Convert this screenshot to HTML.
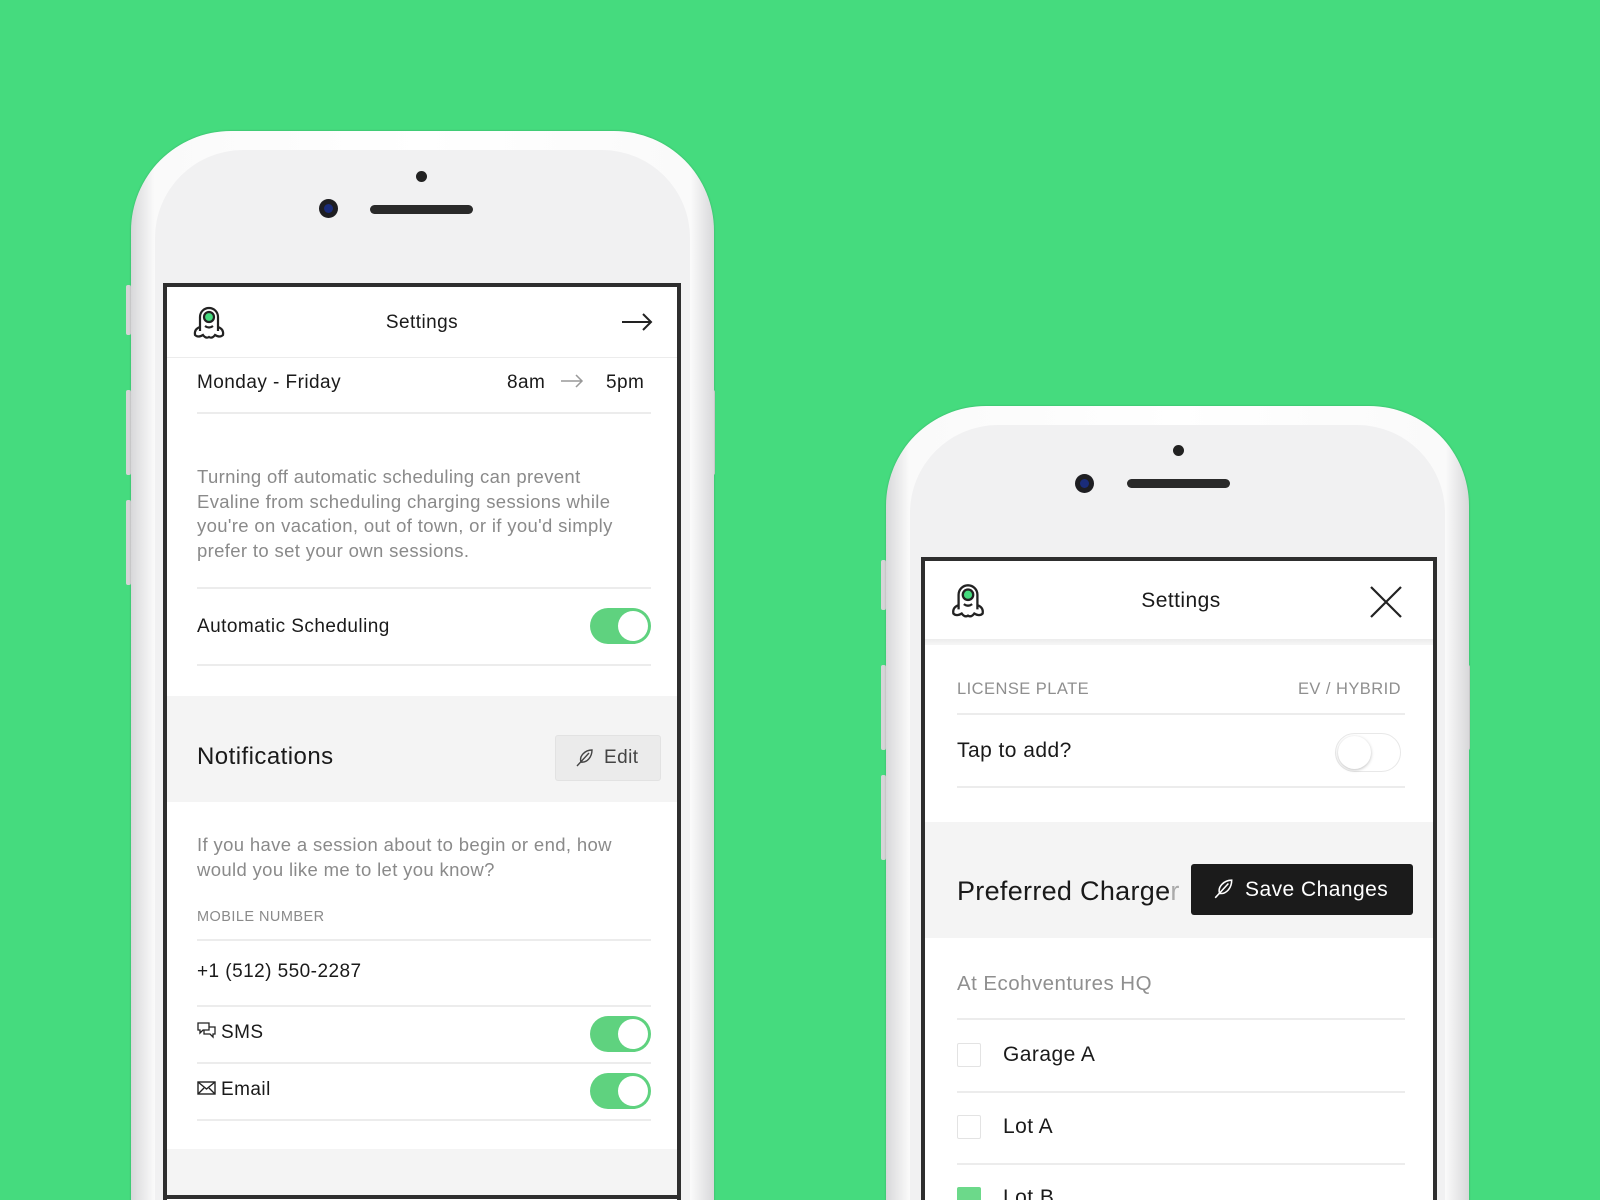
<!DOCTYPE html>
<html style="width:1600px;height:1200px;overflow:hidden"><head><meta charset="utf-8"><style>
*{margin:0;padding:0;box-sizing:border-box}
html,body{width:1600px;height:1200px;overflow:hidden}
body{background:#45db7e;position:relative;font-family:"Liberation Sans",sans-serif;color:#1a1a1a}
.abs{position:absolute}
.phone{position:absolute;border-radius:100px 100px 0 0;background:linear-gradient(90deg,#d8d8da,#fafafa 4%,#fff 50%,#fafafa 96%,#d8d8da);box-shadow:0 0 2px rgba(0,0,0,.2)}
.face{position:absolute;border-radius:88px 88px 0 0;background:#f1f1f2}
.screen{position:absolute;background:#fff;border:4px solid #2e2e2e;border-bottom:none;overflow:hidden}
.line{position:absolute;height:2px;background:#ececec}
.t{position:absolute;white-space:nowrap;line-height:1;letter-spacing:.45px}
.tog{position:absolute;width:61px;height:36px;border-radius:18px;background:#5fd27f}
.tog::after{content:"";position:absolute;right:3px;top:3px;width:30px;height:30px;border-radius:50%;background:#fff}
.gray{position:absolute;background:#f4f4f4}
.side{position:absolute;width:5px;background:#d5d5d7;border-radius:2px}
.p{position:absolute;white-space:nowrap;font-size:18.5px;line-height:24.5px;color:#8a8a8a;letter-spacing:.35px}
</style></head><body>

<!-- LEFT PHONE -->
<div class="side" style="left:126px;top:285px;height:50px"></div>
<div class="side" style="left:126px;top:390px;height:85px"></div>
<div class="side" style="left:126px;top:500px;height:85px"></div>
<div class="side" style="left:710px;top:390px;height:85px"></div>
<div class="phone" style="left:131px;top:131px;width:583px;height:1100px"></div>
<div class="face" style="left:155px;top:150px;width:535px;height:1100px"></div>
<div class="abs" style="left:416px;top:171px;width:11px;height:11px;border-radius:50%;background:#222"></div>
<div class="abs" style="left:319px;top:199px;width:19px;height:19px;border-radius:50%;background:#1e1e22"><div class="abs" style="left:5px;top:5px;width:9px;height:9px;border-radius:50%;background:#1a2c7a"></div></div>
<div class="abs" style="left:370px;top:205px;width:103px;height:9px;border-radius:5px;background:#2a2a2a"></div>

<div class="screen" style="left:163px;top:283px;width:518px;height:917px">
  <div class="line" style="left:0;top:70px;width:518px;height:1px"></div>
  <div class="abs" style="left:20px;top:14px"><svg width="44" height="44" viewBox="0 0 44 44" fill="none" stroke="#222" stroke-width="2.2"><path d="M13 30 V16 a9 9 0 0 1 18 0 V30"/><circle cx="22" cy="16" r="5" fill="#45db7e"/><path d="M18 25 q4 3 8 0"/><path d="M13 26 q-6 2 -5 8 q3 3 8 0 q3 4 6 2 q3 2 6 -2 q5 3 8 0 q1 -6 -5 -8"/></svg></div>
  <div class="t" style="left:0;width:510px;text-align:center;top:26px;font-size:19px">Settings</div>
  <div class="abs" style="left:454px;top:26px"><svg width="32" height="18" viewBox="0 0 32 18" fill="none" stroke="#222" stroke-width="2"><path d="M1 9 H30 M22 1 L30 9 L22 17"/></svg></div>
  <div class="t" style="left:30px;top:86px;font-size:19px">Monday - Friday</div>
  <div class="t" style="left:340px;top:86px;font-size:19px">8am</div>
  <div class="abs" style="left:393px;top:87px"><svg width="24" height="14" viewBox="0 0 24 14" fill="none" stroke="#999" stroke-width="1.5"><path d="M1 7 H22 M16 1 L22 7 L16 13"/></svg></div>
  <div class="t" style="left:439px;top:86px;font-size:19px">5pm</div>
  <div class="line" style="left:30px;top:125px;width:454px"></div>
  <div class="p" style="left:30px;top:178px">Turning off automatic scheduling can prevent<br>Evaline from scheduling charging sessions while<br>you're on vacation, out of town, or if you'd simply<br>prefer to set your own sessions.</div>
  <div class="line" style="left:30px;top:300px;width:454px"></div>
  <div class="t" style="left:30px;top:330px;font-size:19px">Automatic Scheduling</div>
  <div class="tog" style="left:423px;top:321px"></div>
  <div class="line" style="left:30px;top:377px;width:454px"></div>
  <div class="gray" style="left:0;top:409px;width:518px;height:106px"></div>
  <div class="t" style="left:30px;top:458px;font-size:24px">Notifications</div>
  <div class="abs" style="left:388px;top:448px;width:106px;height:46px;background:#ebebeb;border:1px solid #e2e2e2;border-radius:3px"></div>
  <div class="abs" style="left:408px;top:461px"><svg width="20" height="20" viewBox="0 0 20 20" fill="none" stroke="#444" stroke-width="1.4"><path d="M2 18 L14 5 M6 14 C4 8 10 2 17 2 C17 9 12 15 6 14 Z"/></svg></div>
  <div class="t" style="left:437px;top:461px;font-size:19px;color:#444">Edit</div>
  <div class="p" style="left:30px;top:546px">If you have a session about to begin or end, how<br>would you like me to let you know?</div>
  <div class="t" style="left:30px;top:623px;font-size:14.5px;color:#8a8a8a">MOBILE NUMBER</div>
  <div class="line" style="left:30px;top:652px;width:454px"></div>
  <div class="t" style="left:30px;top:675px;font-size:19px">+1 (512) 550-2287</div>
  <div class="line" style="left:30px;top:718px;width:454px"></div>
  <div class="abs" style="left:30px;top:734px"><svg width="20" height="18" viewBox="0 0 20 18" fill="none" stroke="#222" stroke-width="1.3"><path d="M1 2 h11 v7 h-6 l-3 3 v-3 h-2 z M12 6 h6 v7 h-2 v3 l-3 -3 h-6 v-4"/></svg></div>
  <div class="t" style="left:54px;top:736px;font-size:19px">SMS</div>
  <div class="tog" style="left:423px;top:729px"></div>
  <div class="line" style="left:30px;top:775px;width:454px"></div>
  <div class="abs" style="left:30px;top:794px"><svg width="19" height="14" viewBox="0 0 19 14" fill="none" stroke="#222" stroke-width="1.4"><rect x="1" y="1" width="17" height="12"/><path d="M1 1 L9.5 8 L18 1 M1 13 L7 7 M18 13 L12 7"/></svg></div>
  <div class="t" style="left:54px;top:793px;font-size:19px">Email</div>
  <div class="tog" style="left:423px;top:786px"></div>
  <div class="line" style="left:30px;top:832px;width:454px"></div>
  <div class="gray" style="left:0;top:862px;width:518px;height:50px"></div>
  <div class="abs" style="left:0;top:908px;width:518px;height:4px;background:#2e2e2e"></div>
</div>

<!-- RIGHT PHONE -->
<div class="side" style="left:881px;top:560px;height:50px"></div>
<div class="side" style="left:881px;top:665px;height:85px"></div>
<div class="side" style="left:881px;top:775px;height:85px"></div>
<div class="side" style="left:1465px;top:665px;height:85px"></div>
<div class="phone" style="left:886px;top:406px;width:583px;height:800px"></div>
<div class="face" style="left:910px;top:425px;width:535px;height:780px"></div>
<div class="abs" style="left:1173px;top:445px;width:11px;height:11px;border-radius:50%;background:#222"></div>
<div class="abs" style="left:1075px;top:474px;width:19px;height:19px;border-radius:50%;background:#1e1e22"><div class="abs" style="left:5px;top:5px;width:9px;height:9px;border-radius:50%;background:#1a2c7a"></div></div>
<div class="abs" style="left:1127px;top:479px;width:103px;height:9px;border-radius:5px;background:#2a2a2a"></div>

<div class="screen" style="left:921px;top:557px;width:516px;height:643px">
  <div class="abs" style="left:0;top:78px;width:516px;height:6px;background:linear-gradient(#ececec,#f6f6f6)"></div>
  <div class="abs" style="left:20px;top:17px"><svg width="46" height="46" viewBox="0 0 44 44" fill="none" stroke="#222" stroke-width="2.2"><path d="M13 30 V16 a9 9 0 0 1 18 0 V30"/><circle cx="22" cy="16" r="5" fill="#45db7e"/><path d="M18 25 q4 3 8 0"/><path d="M13 26 q-6 2 -5 8 q3 3 8 0 q3 4 6 2 q3 2 6 -2 q5 3 8 0 q1 -6 -5 -8"/></svg></div>
  <div class="t" style="left:0;width:512px;text-align:center;top:29px;font-size:21px">Settings</div>
  <div class="abs" style="left:445px;top:25px"><svg width="32" height="32" viewBox="0 0 32 32" stroke="#222" stroke-width="2.2"><path d="M1 1 L31 31 M31 1 L1 31"/></svg></div>
  <div class="t" style="left:32px;top:120px;font-size:16.5px;color:#8f8f8f">LICENSE PLATE</div>
  <div class="t" style="right:32px;top:120px;font-size:16.5px;color:#8f8f8f">EV / HYBRID</div>
  <div class="line" style="left:32px;top:152px;width:448px"></div>
  <div class="t" style="left:32px;top:179px;font-size:21px">Tap to add?</div>
  <div class="abs" style="left:410px;top:172px;width:66px;height:39px;border-radius:20px;background:#fff;border:1px solid #e8e8e8"><div class="abs" style="left:2px;top:2px;width:33px;height:33px;border-radius:50%;background:#fff;box-shadow:0 1px 3px rgba(0,0,0,.25)"></div></div>
  <div class="line" style="left:32px;top:225px;width:448px"></div>
  <div class="gray" style="left:0;top:261px;width:516px;height:116px"></div>
  <div class="t" style="left:32px;top:317px;font-size:27px;letter-spacing:.3px">Preferred Charge<span style="color:#aaa">r</span></div>
  <div class="abs" style="left:266px;top:303px;width:222px;height:51px;background:#1b1b1b;border-radius:3px"></div>
  <div class="abs" style="left:288px;top:317px"><svg width="22" height="22" viewBox="0 0 20 20" fill="none" stroke="#fff" stroke-width="1.4"><path d="M2 18 L14 5 M6 14 C4 8 10 2 17 2 C17 9 12 15 6 14 Z"/></svg></div>
  <div class="t" style="left:320px;top:318px;font-size:21px;color:#fff">Save Changes</div>
  <div class="t" style="left:32px;top:413px;font-size:20.5px;color:#8f8f8f">At Ecohventures HQ</div>
  <div class="line" style="left:32px;top:457px;width:448px"></div>
  <div class="abs" style="left:32px;top:482px;width:24px;height:24px;border:1px solid #e3e3e3;border-radius:2px"></div>
  <div class="t" style="left:78px;top:483px;font-size:21px">Garage A</div>
  <div class="line" style="left:32px;top:530px;width:448px"></div>
  <div class="abs" style="left:32px;top:554px;width:24px;height:24px;border:1px solid #e3e3e3;border-radius:2px"></div>
  <div class="t" style="left:78px;top:555px;font-size:21px">Lot A</div>
  <div class="line" style="left:32px;top:602px;width:448px"></div>
  <div class="abs" style="left:32px;top:626px;width:24px;height:24px;background:#6cd98a;border-radius:2px"></div>
  <div class="t" style="left:78px;top:626px;font-size:21px">Lot B</div>
</div>
</body></html>
